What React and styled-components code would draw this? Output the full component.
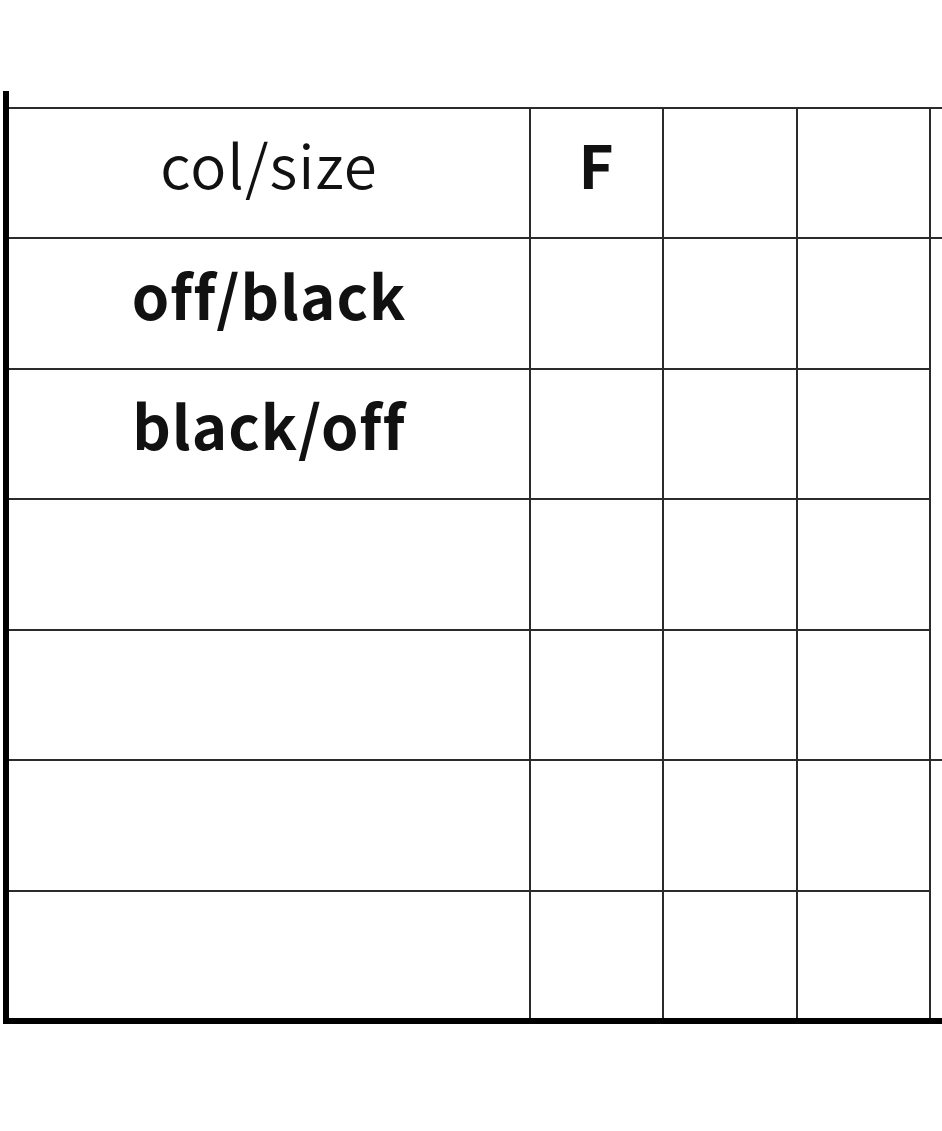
import React from "react";
import styled, { createGlobalStyle } from "styled-components";

const GlobalStyle = createGlobalStyle`
  html, body {
    margin: 0;
    padding: 0;
    background: #fff;
    overflow: hidden;
  }
  body {
    font-family: "Noto Sans CJK JP", "Noto Sans", sans-serif;
    color: #111;
  }
`;

const Page = styled.div`
  width: 942px;
  height: 1131px;
  overflow: hidden;
  padding-top: 91px;
  padding-left: 3px;
  box-sizing: border-box;
`;

const Sheet = styled.div`
  width: 1200px;
  padding-top: 16px;
  border-left: 6px solid #000;
  border-bottom: 6px solid #000;
`;

const Grid = styled.div`
  display: grid;
  grid-template-columns: 522px 133px 134px 133px 260px;
  grid-template-rows: 130px 131px 130px 131px 130px 131px 128px;
`;

const Cell = styled.div`
  box-sizing: border-box;
  border-top: 2px solid ${(p) => (p.$open ? "transparent" : "#2b2b2b")};
  border-right: 2px solid #2b2b2b;
  display: flex;
  align-items: center;
  justify-content: center;
  font-size: 60px;
  line-height: 1;
  font-weight: ${(p) => (p.$light ? 350 : 700)};
  font-variant-ligatures: none;
  letter-spacing: 1px;
  padding-bottom: 20px;
`;

const rows = [
  { label: "col/size", light: true, first: "F", edge: true },
  { label: "off/black", edge: true },
  { label: "black/off" },
  { label: "" },
  { label: "" },
  { label: "", edge: true },
  { label: "" },
];

export default function App() {
  return (
    <>
      <GlobalStyle />
      <Page>
        <Sheet>
          <Grid>
            {rows.map((row, i) => (
              <React.Fragment key={i}>
                <Cell $light={row.light}>{row.label}</Cell>
                <Cell>{row.first || ""}</Cell>
                <Cell />
                <Cell />
                <Cell $open={!row.edge} />
              </React.Fragment>
            ))}
          </Grid>
        </Sheet>
      </Page>
    </>
  );
}
